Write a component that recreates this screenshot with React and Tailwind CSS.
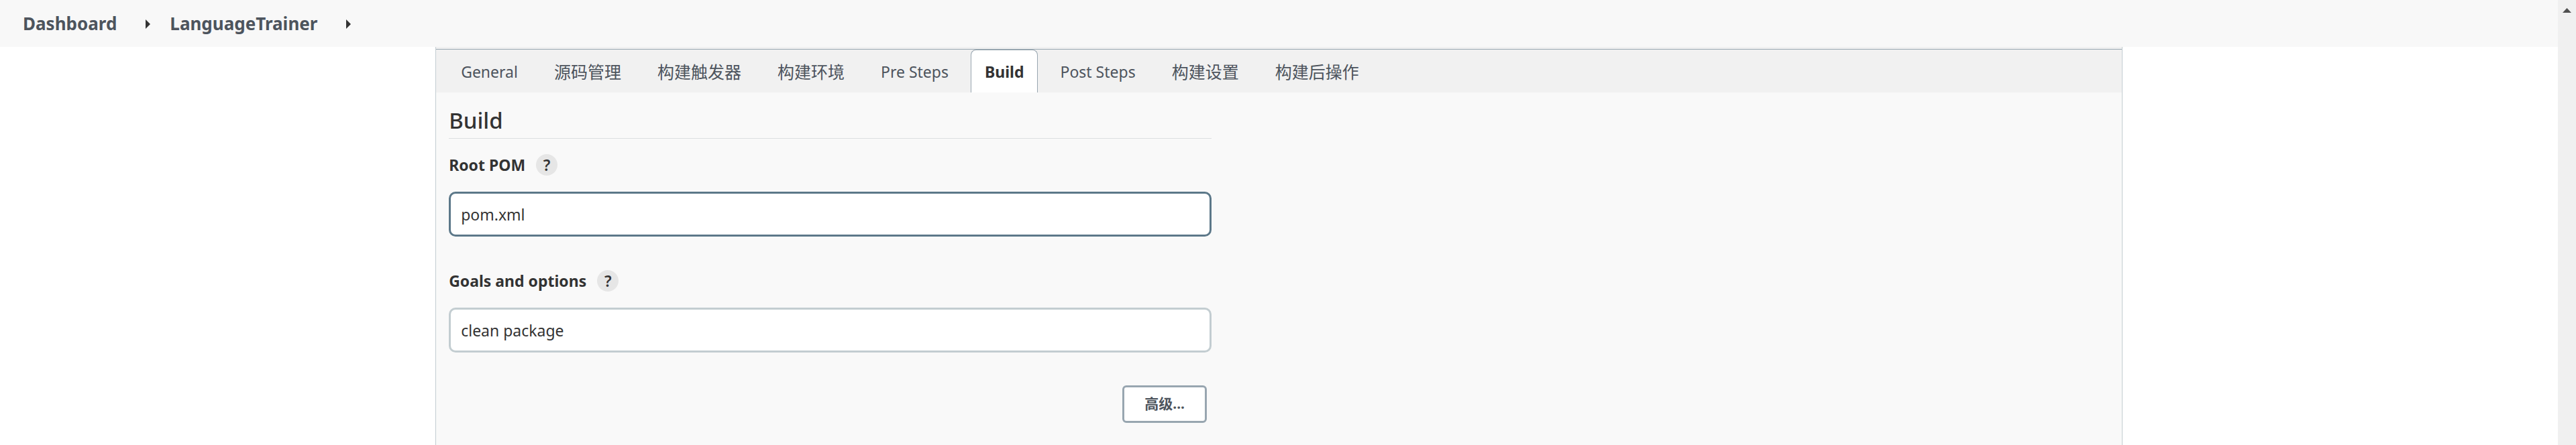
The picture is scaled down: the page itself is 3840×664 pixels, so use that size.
const TABS = [
  { name: 'General' },
  { name: '源码管理', cjk: true },
  { name: '构建触发器', cjk: true },
  { name: '构建环境', cjk: true },
  { name: 'Pre Steps' },
  { name: 'Build' },
  { name: 'Post Steps' },
  { name: '构建设置', cjk: true },
  { name: '构建后操作', cjk: true },
];

function Arrow() {
  return (
    <svg className="h-[14px] w-[7px] fill-[#333]" viewBox="0 0 7 14" aria-hidden="true">
      <path d="M0 0 7 7 0 14Z" />
    </svg>
  );
}

function Breadcrumbs() {
  return (
    <nav className="flex h-[70px] items-center bg-[#f8f8f8] px-[34px] pt-px text-[26px] font-bold text-[#4d545d]">
      <a href="#dashboard">Dashboard</a>
      <span className="ml-[43px] mr-[29px]">
        <Arrow />
      </span>
      <a href="#language-trainer">LanguageTrainer</a>
      <span className="ml-[43px]">
        <Arrow />
      </span>
    </nav>
  );
}

function Tabs({ active }) {
  return (
    <div className="bg-[#f1f1f1] pt-[3px]">
      <div role="tablist" className="flex h-[65px] gap-3 border-t border-[#98a6b0] pl-4">
        {TABS.map(({ name, cjk }) => (
          <button
            key={name}
            type="button"
            role="tab"
            aria-selected={name === active}
            className={
              name === active
                ? 'rounded-t-lg border-x border-t border-[#98a6b0] bg-white px-5 pt-[2px] font-bold text-[#333]'
                : 'border-x border-t border-transparent px-5 pt-[2px] text-[#4d545d]'
            }
          >
            <span className={cjk ? 'text-[25px]' : undefined}>{name}</span>
          </button>
        ))}
      </div>
    </div>
  );
}

function Field({ id, label, value, focused }) {
  return (
    <div>
      <div className="flex h-8 items-center gap-4">
        <label htmlFor={id} className="font-bold">
          {label}
        </label>
        <button
          type="button"
          aria-label={`Help for ${label}`}
          className="flex size-8 items-center justify-center rounded-full bg-[#e6e6e6] font-semibold leading-none"
        >
          ?
        </button>
      </div>
      <input
        id={id}
        type="text"
        defaultValue={value}
        className={
          focused
            ? 'mt-6 block h-[67px] w-full rounded-[10px] border-3 border-[#5c7889] bg-white px-[15px] outline-none'
            : 'mt-6 block h-[67px] w-full rounded-[10px] border-3 border-[#c3cdd1] bg-white px-[15px] outline-none'
        }
      />
    </div>
  );
}

export default function App() {
  return (
    <div className="flex min-h-screen bg-white font-['Noto_Sans','Noto_Sans_CJK_SC',sans-serif] text-[23px] text-[#333]">
      <div className="flex min-w-0 grow flex-col">
        <Breadcrumbs />
        <main className="mx-auto flex w-[65.95%] grow flex-col border-x border-[#c3cdd1] bg-[#f9f9f9]">
          <Tabs active="Build" />
          <form className="ml-[19px] max-w-[1137px] pb-8" onSubmit={(e) => e.preventDefault()}>
            <h2 className="flex h-[69px] items-end border-b border-[#dcdfe0] pb-[6px] text-[33px] font-medium leading-[40px]">
              Build
            </h2>
            <div className="mt-[23px] flex flex-col gap-[50px]">
              <Field id="root-pom" label="Root POM" value="pom.xml" focused />
              <Field id="goals" label="Goals and options" value="clean package" />
            </div>
            <div className="mt-[49px] flex justify-end pr-[7px]">
              <button
                type="button"
                className="h-14 w-[126px] rounded-md border-3 border-[#98a6b0] bg-white text-[21px] font-bold text-[#4d545d]"
              >
                高级...
              </button>
            </div>
          </form>
        </main>
      </div>
      <div className="flex w-[27px] shrink-0 justify-center bg-[#f0f0f0] pt-3" aria-hidden="true">
        <svg className="h-[7px] w-[13px] fill-[#505050]" viewBox="0 0 13 7">
          <path d="M6.5 0 13 7H0Z" />
        </svg>
      </div>
    </div>
  );
}
